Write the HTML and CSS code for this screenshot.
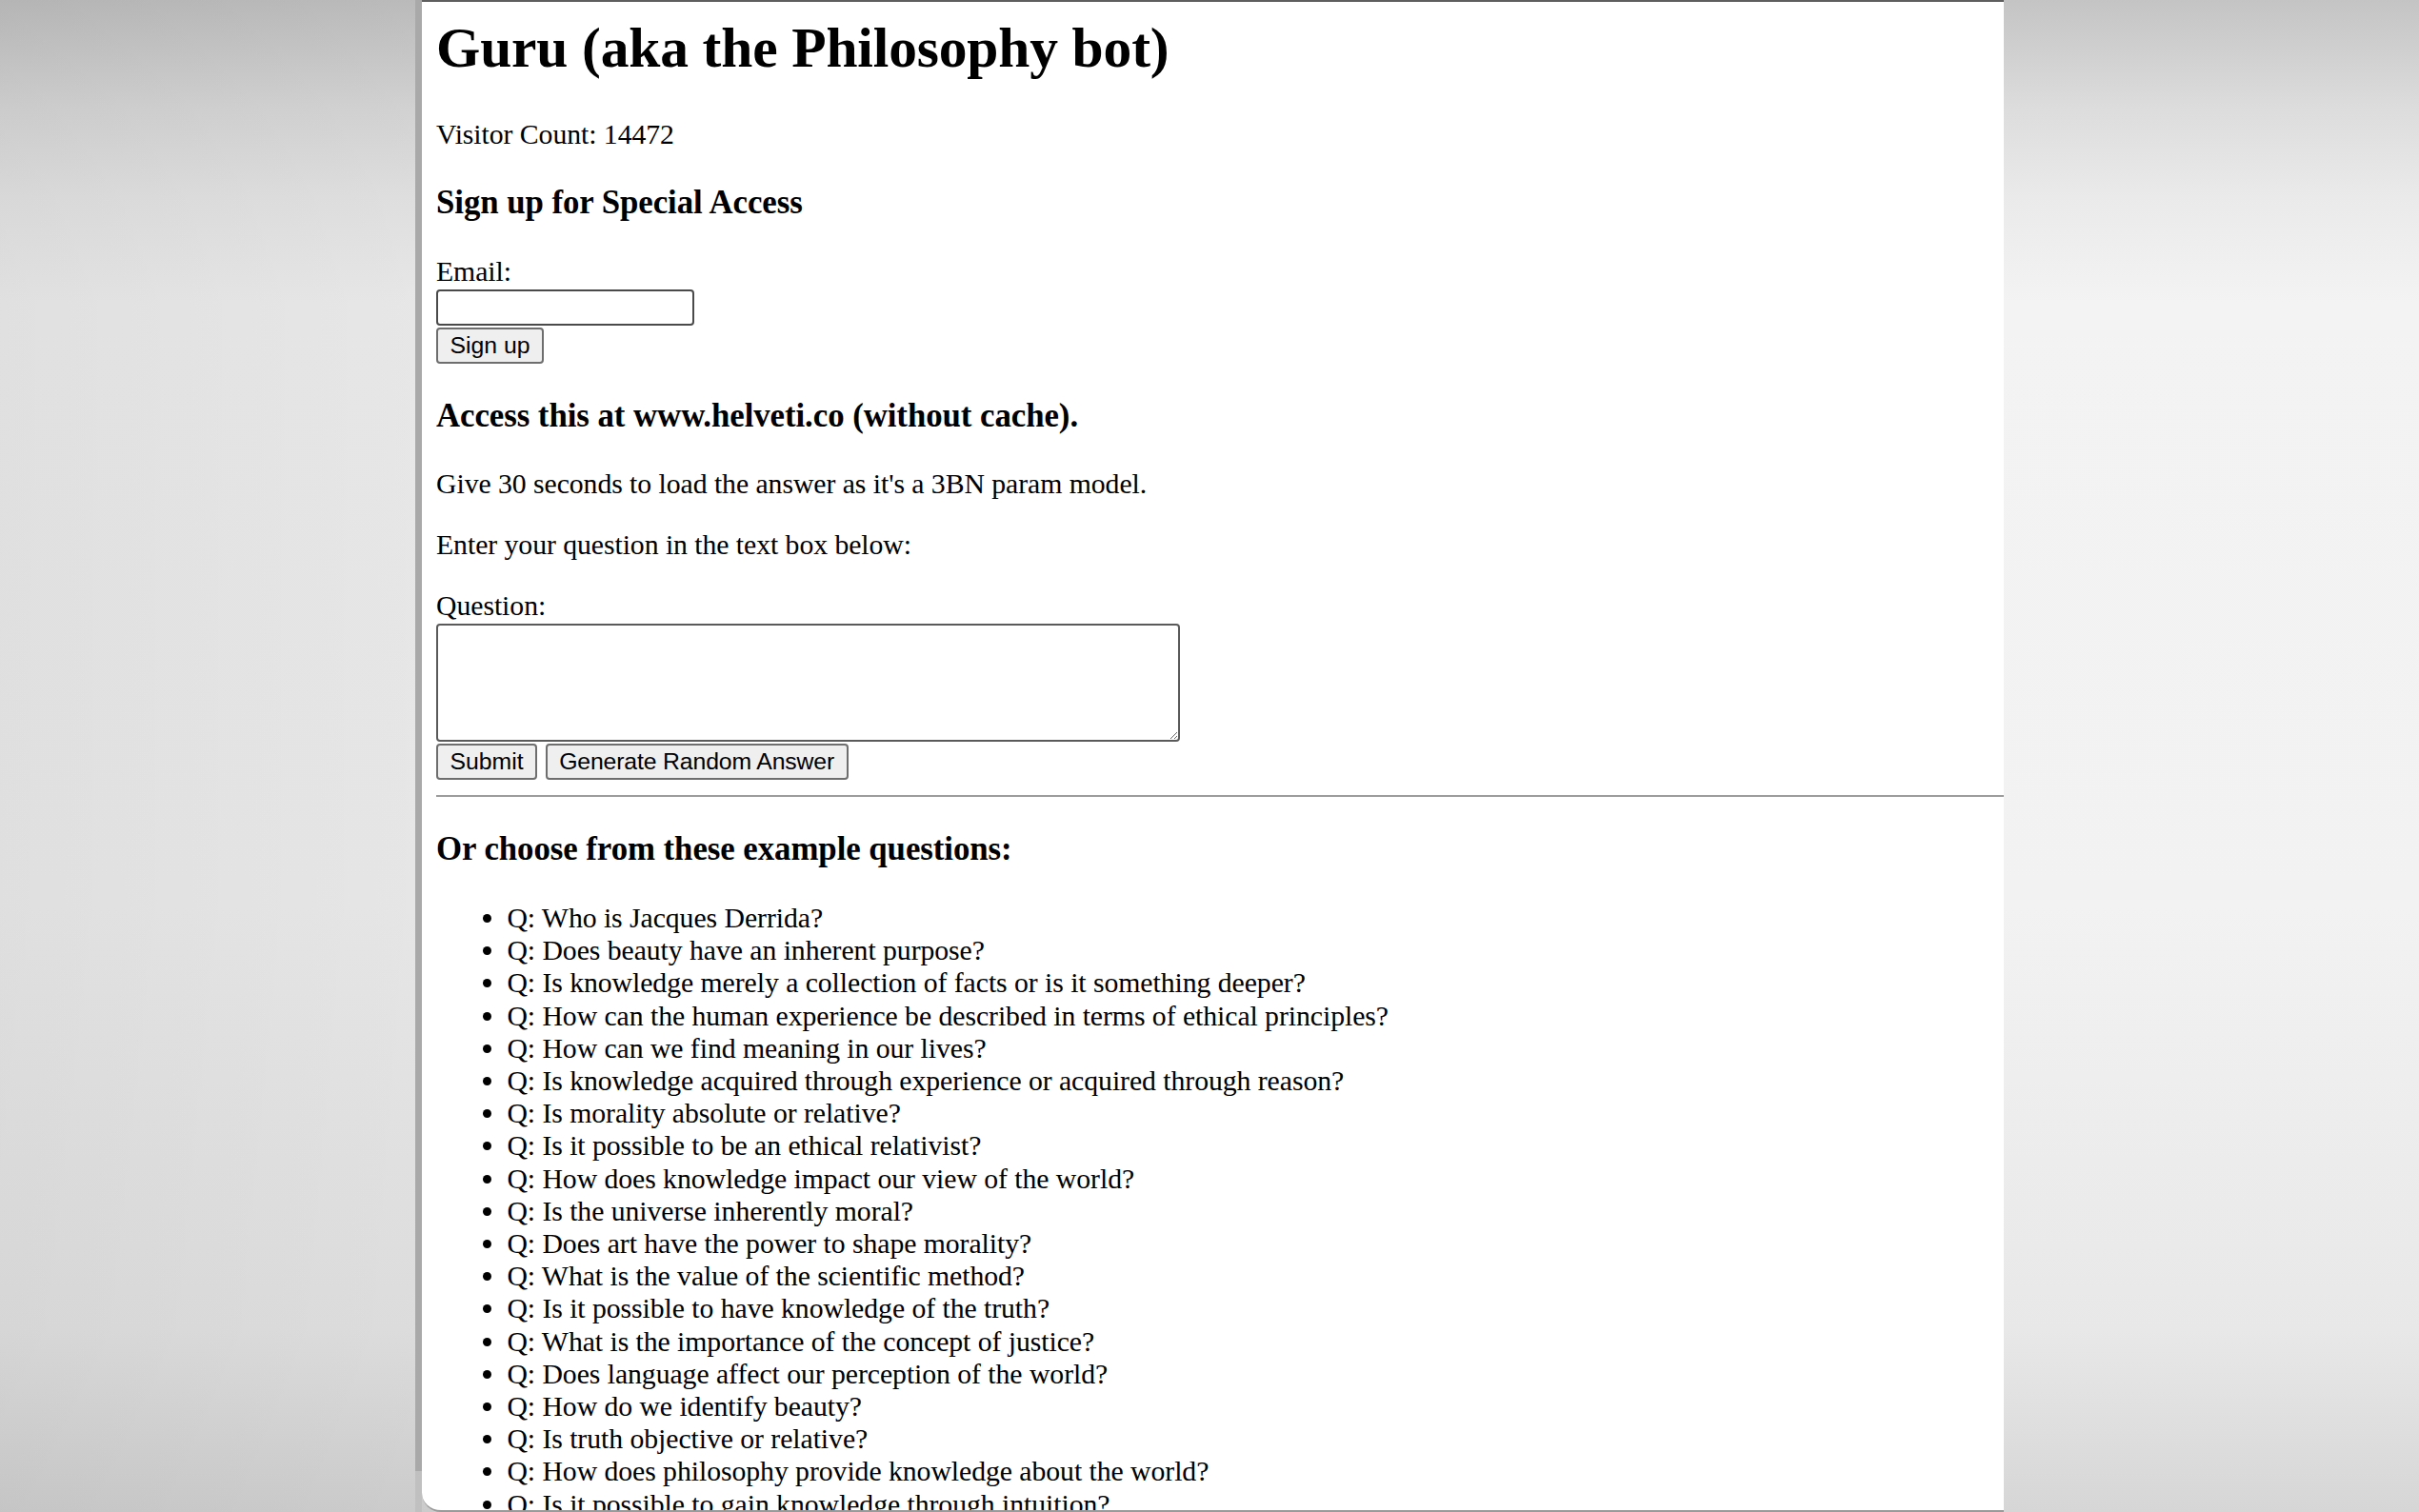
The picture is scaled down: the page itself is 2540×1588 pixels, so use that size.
FILE: index.html
```html
<!DOCTYPE html>
<html lang="en">
<head>
<meta charset="utf-8">
<title>Guru (aka the Philosophy bot)</title>
<link rel="stylesheet" href="styles.css">
</head>
<body>
<div class="desk">
  <div class="behind">
    <div class="behind-edge"></div>
    <div class="behind-foot"></div>
  </div>
  <main class="window">
    <div class="page">
      <h1>Guru (aka the Philosophy bot)</h1>
      <p>Visitor Count: 14472</p>
      <h3>Sign up for Special Access</h3>
      <form class="signup">
        <label for="email">Email:</label>
        <input id="email" type="email">
        <button type="button" class="btn">Sign up</button>
      </form>
      <h3>Access this at www.helveti.co (without cache).</h3>
      <p>Give 30 seconds to load the answer as it's a 3BN param model.</p>
      <p>Enter your question in the text box below:</p>
      <form class="ask">
        <label for="question">Question:</label>
        <textarea id="question"></textarea>
        <div class="actions">
          <button type="button" class="btn">Submit</button>
          <button type="button" class="btn btn-wide">Generate Random Answer</button>
        </div>
      </form>
      <hr>
      <h3>Or choose from these example questions:</h3>
      <ul class="examples">
        <li>Q: Who is Jacques Derrida?</li>
        <li>Q: Does beauty have an inherent purpose?</li>
        <li>Q: Is knowledge merely a collection of facts or is it something deeper?</li>
        <li>Q: How can the human experience be described in terms of ethical principles?</li>
        <li>Q: How can we find meaning in our lives?</li>
        <li>Q: Is knowledge acquired through experience or acquired through reason?</li>
        <li>Q: Is morality absolute or relative?</li>
        <li>Q: Is it possible to be an ethical relativist?</li>
        <li>Q: How does knowledge impact our view of the world?</li>
        <li>Q: Is the universe inherently moral?</li>
        <li>Q: Does art have the power to shape morality?</li>
        <li>Q: What is the value of the scientific method?</li>
        <li>Q: Is it possible to have knowledge of the truth?</li>
        <li>Q: What is the importance of the concept of justice?</li>
        <li>Q: Does language affect our perception of the world?</li>
        <li>Q: How do we identify beauty?</li>
        <li>Q: Is truth objective or relative?</li>
        <li>Q: How does philosophy provide knowledge about the world?</li>
        <li>Q: Is it possible to gain knowledge through intuition?</li>
      </ul>
    </div>
  </main>
</div>
</body>
</html>
```

FILE: styles.css
```css
html, body {
  margin: 0;
  padding: 0;
}

body {
  width: 2540px;
  height: 1588px;
  overflow: hidden;
  background:
    linear-gradient(to right, rgba(0,0,0,0.08) 0px, rgba(0,0,0,0.05) 437px, rgba(0,0,0,0) 2104px),
    linear-gradient(to bottom, #c4c4c4 0%, #dcdcdc 7%, #eaeaea 13%, #f3f3f3 20%, #f2f2f2 60%, #e8e8e8 88%, #d6d6d6 100%);
  font-family: "Liberation Serif", "Times New Roman", serif;
  color: #000;
}

.desk {
  display: flex;
  height: 1588px;
  padding-left: 436px;
  box-sizing: border-box;
}

.behind {
  width: 7px;
  display: flex;
  flex-direction: column;
}

.behind-edge {
  height: 1545px;
  background: #a9a9a9;
}

.behind-foot {
  flex: 1;
  background: #c0c0c0;
}

.window {
  width: 1661px;
  height: 1588px;
  box-sizing: border-box;
  background: #fff;
  border-top: 2px solid #5e5e5e;
  border-bottom: 2px solid #9a9a9a;
  border-bottom-left-radius: 20px;
  overflow: hidden;
}

.page {
  padding: 13.7px 0 0 15px;
  font-size: 29.76px;
  line-height: 34.2px;
  letter-spacing: -0.06px;
}

h1 {
  font-size: 59.52px;
  line-height: 68.4px;
  font-weight: bold;
  margin: 0 0 39.88px;
  letter-spacing: -0.15px;
}

p {
  margin: 29.76px 0;
}

h3 {
  font-size: 34.82px;
  line-height: 40px;
  font-weight: bold;
  margin: 34.82px 0;
}

form {
  margin: 0;
  display: flex;
  flex-direction: column;
  align-items: flex-start;
}

label {
  line-height: 34.2px;
}

input {
  margin: 1.8px 0 0;
  width: 271px;
  height: 38px;
  box-sizing: border-box;
  padding: 0 4px;
  border: 2px solid #4a4a4a;
  border-radius: 4px;
  background: #fff;
  font-size: 24.8px;
}

textarea {
  margin: 1.8px 0 0;
  width: 781px;
  height: 124px;
  box-sizing: border-box;
  padding: 4px;
  border: 2px solid #5a5a5a;
  border-radius: 4px;
  background: #fff;
  font-size: 24.8px;
}

.btn {
  margin: 2px 0 0;
  height: 38px;
  box-sizing: border-box;
  padding: 0 12.5px;
  font-family: "Liberation Sans", Arial, sans-serif;
  font-size: 24.8px;
  letter-spacing: 0;
  color: #000;
  background: #efefef;
  border: 2px solid #6e6e6e;
  border-radius: 4px;
}

.btn-wide {
  letter-spacing: -0.15px;
}

.actions {
  display: flex;
  gap: 8.5px;
}

hr {
  margin: 16px 0 0;
  height: 0;
  border: 0;
  border-top: 2px solid #9c9c9c;
}

.examples {
  margin: 29.76px 0;
  padding-left: 74.4px;
}
```
